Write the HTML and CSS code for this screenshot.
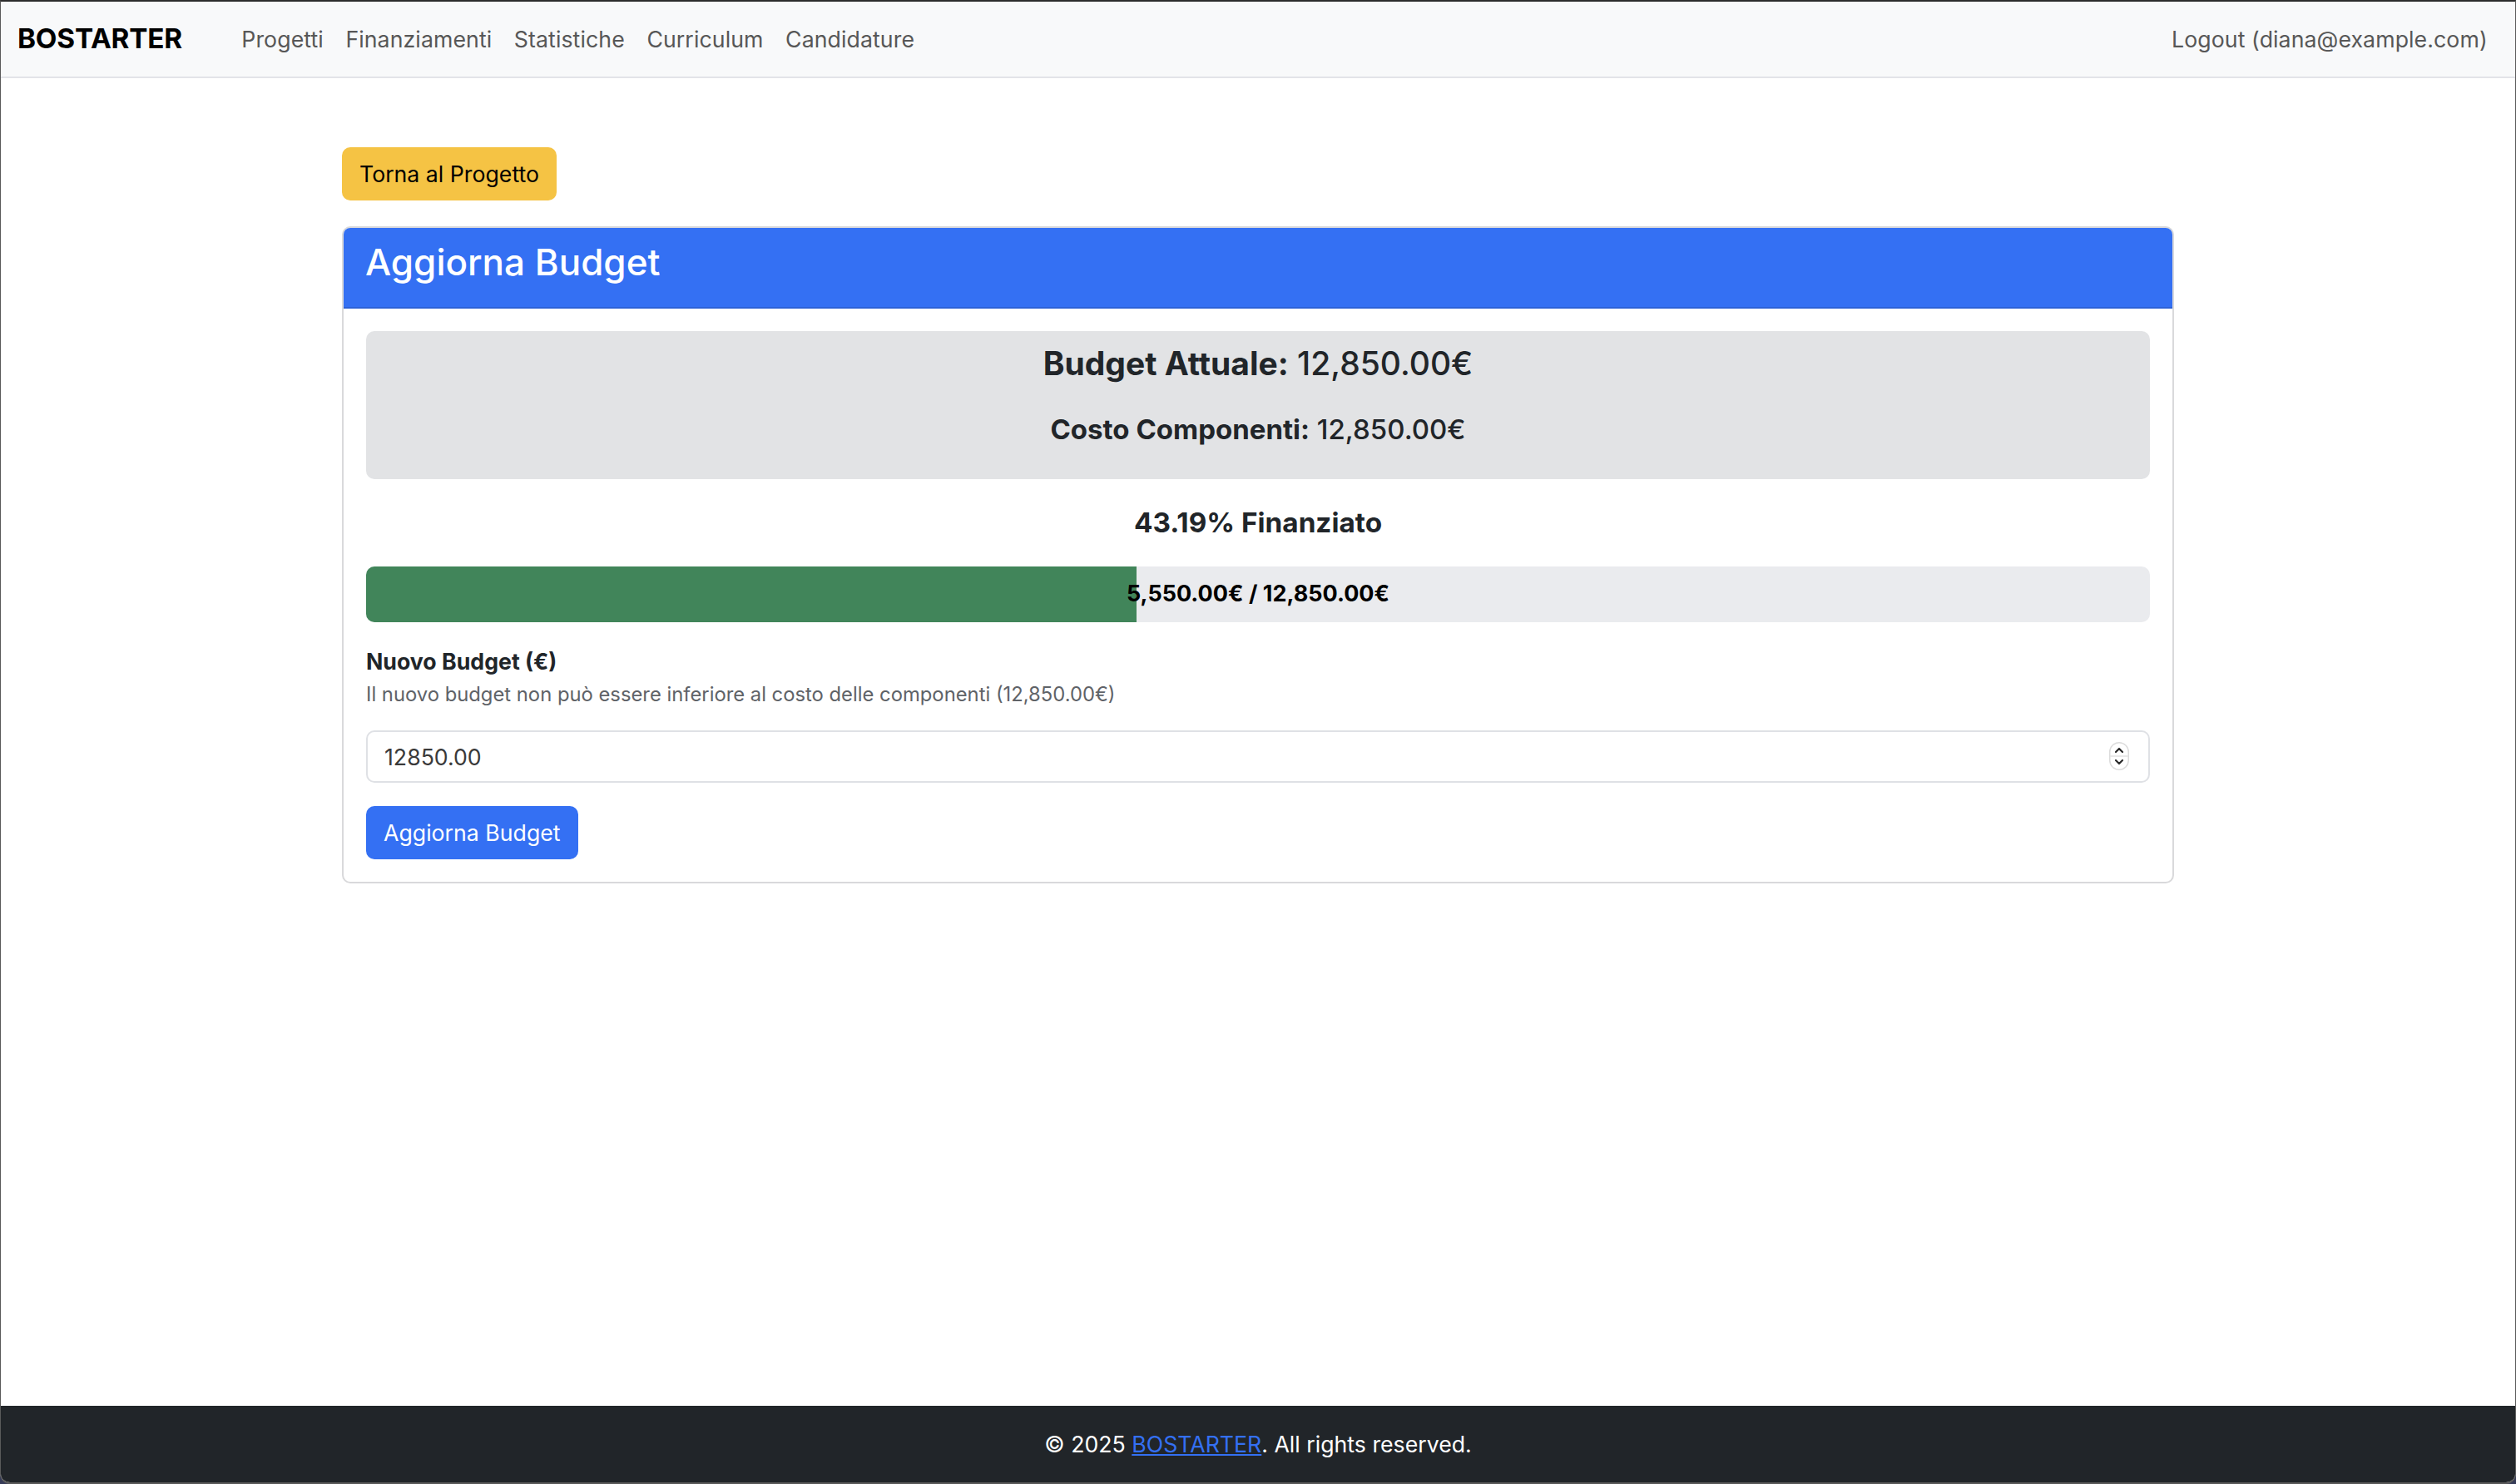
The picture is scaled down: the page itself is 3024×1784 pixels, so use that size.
FILE: index.html
```html
<!DOCTYPE html>
<html lang="it">
<head>
<meta charset="utf-8">
<title>Aggiorna Budget - BOSTARTER</title>
<link rel="stylesheet" href="styles.css">
</head>
<body>
<div class="window">
  <nav class="navbar">
    <a class="brand" href="#">BOSTARTER</a>
    <ul class="nav-links">
      <li><a href="#">Progetti</a></li>
      <li><a href="#">Finanziamenti</a></li>
      <li><a href="#">Statistiche</a></li>
      <li><a href="#">Curriculum</a></li>
      <li><a href="#">Candidature</a></li>
    </ul>
    <a class="logout" href="#">Logout (diana@example.com)</a>
  </nav>

  <main class="container">
    <div class="back-row">
      <a class="btn btn-warning" href="#">Torna al Progetto</a>
    </div>

    <section class="card">
      <header class="card-header">
        <h3>Aggiorna Budget</h3>
      </header>
      <div class="card-body">
        <div class="summary">
          <h4><strong>Budget Attuale:</strong> 12,850.00€</h4>
          <h5><strong>Costo Componenti:</strong> 12,850.00€</h5>
        </div>

        <h5 class="funded">43.19% Finanziato</h5>

        <div class="progress">
          <div class="progress-fill" style="width: 43.19%"></div>
          <span class="progress-label">5,550.00€ / 12,850.00€</span>
        </div>

        <form class="budget-form">
          <label class="form-label" for="budget">Nuovo Budget (€)</label>
          <div class="form-text">Il nuovo budget non può essere inferiore al costo delle componenti (12,850.00€)</div>
          <div class="input-wrap">
            <input class="form-control" id="budget" type="number" value="12850.00" step="0.01">
            <span class="spinner" aria-hidden="true">
              <svg width="24" height="34" viewBox="0 0 24 34">
                <rect x="0.75" y="0.75" width="22.5" height="32.5" rx="11.25" fill="#ffffff" stroke="#dcdcdc" stroke-width="1.5"/>
                <line x1="1" y1="17" x2="23" y2="17" stroke="#e2e2e2" stroke-width="1.5"/>
                <path d="M8 12 L12 8 L16 12" fill="none" stroke="#2a2a2a" stroke-width="2.2" stroke-linecap="round" stroke-linejoin="round"/>
                <path d="M8 22 L12 26 L16 22" fill="none" stroke="#2a2a2a" stroke-width="2.2" stroke-linecap="round" stroke-linejoin="round"/>
              </svg>
            </span>
          </div>
          <button class="btn btn-primary" type="button">Aggiorna Budget</button>
        </form>
      </div>
    </section>
  </main>

  <footer class="footer">
    <p>© 2025 <a href="#">BOSTARTER</a>. All rights reserved.</p>
  </footer>
</div>
</body>
</html>
```

FILE: styles.css
```css
* {
  box-sizing: border-box;
}

html {
  background: #363b57;
}

body {
  margin: 0;
  font-family: Inter, "Noto Sans", "Liberation Sans", sans-serif;
  font-size: 26.7px;
  line-height: 1.5;
  color: #212529;
}

.window {
  min-height: 100vh;
  display: flex;
  flex-direction: column;
  background: #ffffff;
  border-top: 2px solid #2c2c2c;
  border-left: 1px solid #5a5a5a;
  border-right: 1px solid #5a5a5a;
  border-bottom: 2px solid #5a5a5a;
  border-radius: 0 0 12px 12px;
  overflow: hidden;
}

/* Navbar */
.navbar {
  height: 92px;
  display: flex;
  align-items: center;
  padding: 0 20px 0 20px;
  background: #f8f9fa;
  border-bottom: 2px solid #e3e4e8;
}

.brand {
  font-size: 33.3px;
  font-weight: 700;
  color: #000;
  text-decoration: none;
  letter-spacing: -0.2px;
  margin-right: 58px;
}

.nav-links {
  display: flex;
  list-style: none;
  margin: 0;
  padding: 0;
}

.nav-links a,
.logout {
  display: block;
  padding: 0 13.3px;
  color: #575757;
  text-decoration: none;
  line-height: 40px;
  letter-spacing: 0.08px;
}

.logout {
  margin-left: auto;
}

/* Main */
.container {
  width: 2202px;
  margin: 0 auto;
  padding: 83px 0 40px;
}

.back-row {
  display: flex;
  margin-bottom: 31px;
}

.btn {
  display: inline-flex;
  align-items: center;
  height: 64px;
  padding: 0 21px;
  border: 0;
  border-radius: 10px;
  font-family: inherit;
  font-size: 26.7px;
  line-height: 40px;
  text-decoration: none;
  cursor: pointer;
}

.btn-warning {
  background: #f5c344;
  color: #000;
}

.btn-primary {
  background: #3470f3;
  color: #fff;
}

/* Card */
.card {
  border: 2px solid #d9d9db;
  border-radius: 10px;
  overflow: hidden;
}

.card-header {
  background: #3470f3;
  padding: 13px 26px 13px;
  border-bottom: 2px solid #2d62d6;
}

.card-header h3 {
  margin: 0 0 13px;
  font-size: 44px;
  font-weight: 500;
  line-height: 56px;
  color: #fff;
}

.card-body {
  padding: 27px 27px 27px;
}

.summary {
  background: #e2e3e5;
  border-radius: 10px;
  text-align: center;
  padding: 15px 20px 40px;
}

.summary h4 {
  margin: 0 0 35px;
  font-size: 39px;
  font-weight: 500;
  line-height: 48px;
}

.summary h5 {
  margin: 0;
  font-size: 33px;
  font-weight: 500;
  line-height: 40px;
}

.summary strong {
  font-weight: 700;
}

.funded {
  margin: 32px 0 33px;
  text-align: center;
  font-size: 33.3px;
  font-weight: 700;
  line-height: 40px;
}

/* Progress */
.progress {
  display: grid;
  height: 67px;
  background: #eaebee;
  border-radius: 10px;
  overflow: hidden;
  margin-bottom: 27px;
}

.progress-fill {
  grid-area: 1 / 1;
  justify-self: start;
  height: 100%;
  background: #41855a;
}

.progress-label {
  grid-area: 1 / 1;
  place-self: center;
  font-size: 27px;
  font-weight: 700;
  color: #000;
}

/* Form */
.budget-form {
  display: flex;
  flex-direction: column;
  align-items: flex-start;
}

.form-label {
  font-weight: 700;
  line-height: 40px;
}

.form-text {
  margin-top: 2px;
  font-size: 23.8px;
  line-height: 35px;
  color: #5f6368;
}

.input-wrap {
  position: relative;
  width: 100%;
  margin: 26px 0 28px;
}

.form-control {
  display: block;
  width: 100%;
  height: 63px;
  padding: 0 20px;
  border: 2px solid #dfe1e5;
  border-radius: 10px;
  font-family: inherit;
  font-size: 26.7px;
  color: #3a3a3a;
  background: #fff;
  -moz-appearance: textfield;
}

.form-control::-webkit-inner-spin-button,
.form-control::-webkit-outer-spin-button {
  -webkit-appearance: none;
  margin: 0;
}

.spinner {
  position: absolute;
  right: 25px;
  top: 14px;
  width: 24px;
  height: 34px;
  display: block;
}

.spinner svg {
  display: block;
}

/* Footer */
.footer {
  margin-top: auto;
  background: #212529;
  color: #fff;
  text-align: center;
  padding: 26px 0;
}

.footer p {
  margin: 0;
  line-height: 40px;
}

.footer a {
  color: #3470f3;
  text-decoration: underline;
}
```
